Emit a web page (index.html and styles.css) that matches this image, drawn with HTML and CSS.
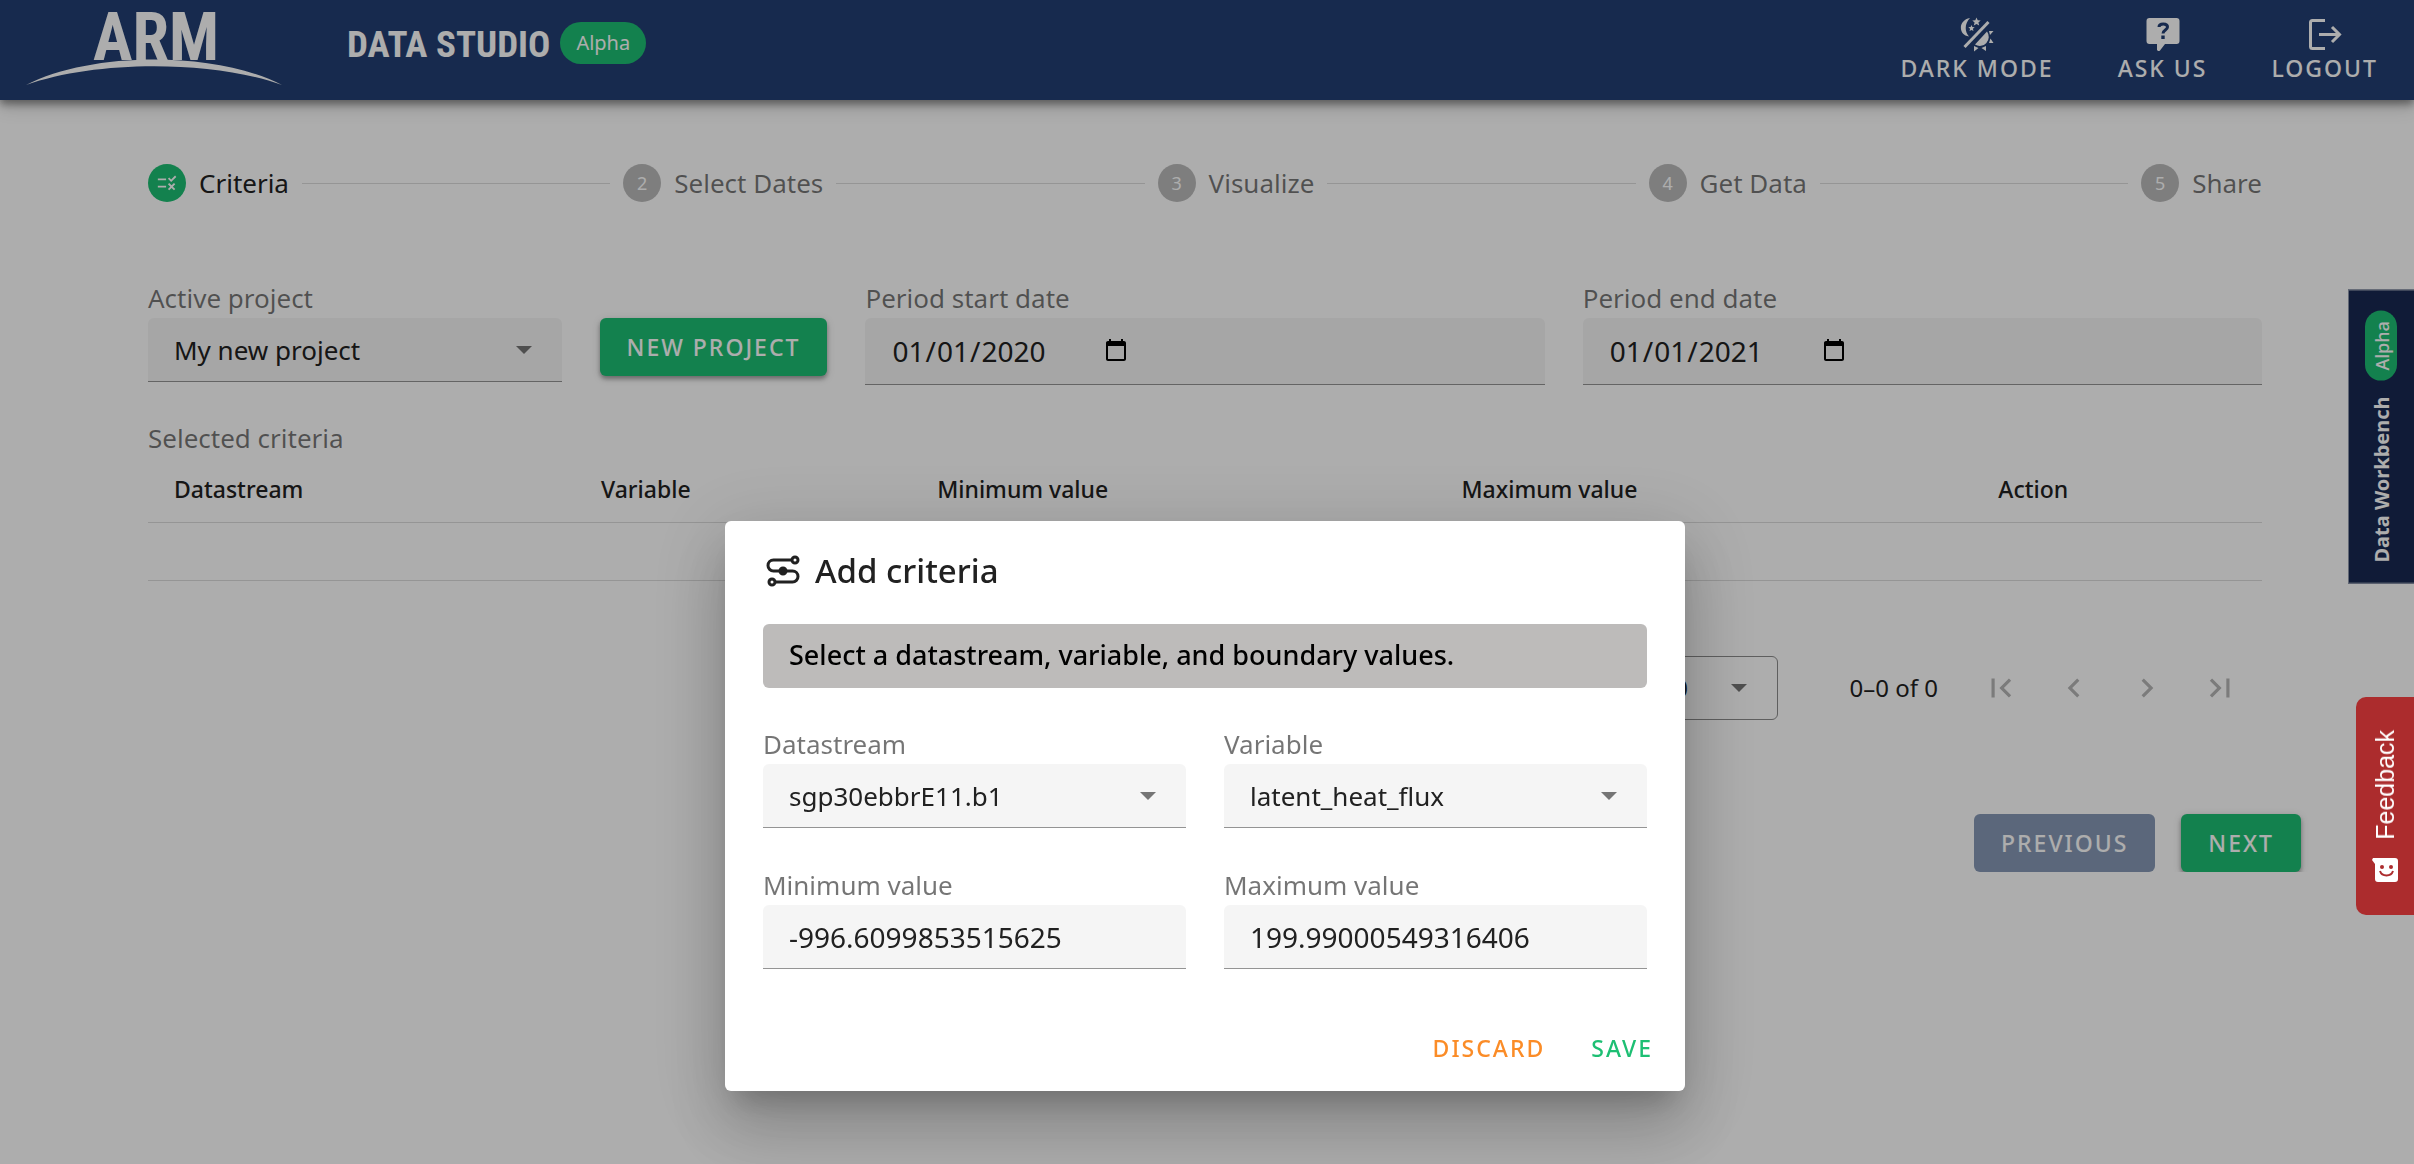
FILE: index.html
```
<!DOCTYPE html>
<html lang="en">
<head>
    <meta charset="UTF-8">
    <meta name="viewport" content="width=device-width, initial-scale=1.0">
    <title>Data Studio | ARM</title>
    <link rel="stylesheet" href="styles.css">
</head>
<body>
    <header class="header">
        <a href="#" class="logo" aria-label="ARM">
            <svg viewBox="0 0 260 100" width="260" height="100">
                <text x="67" y="60" class="logo-text">ARM</text>
                <path d="M0 85C66 51 190 51 256 85C186 60 70 60 0 85Z" fill="#fff"/>
            </svg>
        </a>
        <h1 class="title">DATA STUDIO</h1>
        <span class="badge">Alpha</span>
        <nav class="navbar">
            <button type="button" class="nav-btn">
                <svg viewBox="0 0 36 36" width="36" height="36" fill="#fff">
                    <path d="M11 2C-1 4-1 19 10 20.500C5 15 6 7 11 2Z"/>
                    <path d="M5.500 31L29.500 6" stroke="#fff" stroke-width="3"/>
                    <path d="M17.500 1.500l1.200 2.800 3 .2-2.300 2 .8 3-2.700-1.600-2.700 1.600.8-3-2.300-2 3-.2zM12.500 9l.9 2.100 2.300.2-1.800 1.500.6 2.300-2-1.200-2 1.200.6-2.300-1.800-1.500 2.300-.2z"/>
                    <path d="M28 15.500A9 9 0 0 1 16 28.500ZM30 15h4.500L31 19zM31.500 22.500l3 4.500H30zM15 30l4.500 2-4.500 3.500zM27 30v5l-4.500-3z"/>
                </svg>
                <span>DARK MODE</span>
            </button>
            <button type="button" class="nav-btn">
                <svg viewBox="0 0 36 36" width="36" height="36" fill="#fff">
                    <path d="M4.500 2h27a3 3 0 0 1 3 3v20a3 3 0 0 1-3 3H20l-5 6.500c-1 1-3 .5-3-1V28H4.500a3 3 0 0 1-3-3V5a3 3 0 0 1 3-3z"/>
                    <path d="M14 11c0-4 8.500-4 8.500 0 0 3-4.500 3-4.500 6.500" fill="none" stroke="#233f73" stroke-width="3"/>
                    <path d="M16.300 19.500h3.400v3.500h-3.400z" fill="#233f73"/>
                </svg>
                <span>ASK US</span>
            </button>
            <button type="button" class="nav-btn">
                <svg viewBox="0 0 36 36" width="36" height="36" fill="none" stroke="#fff" stroke-width="3">
                    <path d="M18 4.500H5.500a2 2 0 0 0-2 2v24a2 2 0 0 0 2 2H18M12 18.500h20M25 11l7.500 7.500L25 26"/>
                </svg>
                <span>LOGOUT</span>
            </button>
        </nav>
    </header>

    <main class="main">
        <ol class="stepper">
            <li class="step active">
                <span class="dot">
                    <svg viewBox="0 0 24 24" width="22" height="22" fill="#fff"><path d="M16.540 11L13 7.460l1.410-1.410 2.120 2.120 4.240-4.240 1.410 1.410L16.540 11zM11 7H2v2h9V7zm10 6.410L19.590 12 17 14.590 14.410 12 13 13.410 15.590 16 13 18.590 14.410 20 17 17.410 19.590 20 21 18.590 18.410 16 21 13.410zM11 15H2v2h9v-2z"/></svg>
                </span>
                Criteria
            </li>
            <li class="line"></li>
            <li class="step"><span class="dot">2</span>Select Dates</li>
            <li class="line"></li>
            <li class="step"><span class="dot">3</span>Visualize</li>
            <li class="line"></li>
            <li class="step"><span class="dot">4</span>Get Data</li>
            <li class="line"></li>
            <li class="step"><span class="dot">5</span>Share</li>
        </ol>

        <form class="filters">
            <div class="field">
                <label for="project">Active project</label>
                <select id="project" class="control select">
                    <option>My new project</option>
                </select>
            </div>
            <button type="button" class="btn">NEW PROJECT</button>
            <div class="field">
                <label for="start-date">Period start date</label>
                <input type="date" id="start-date" class="control date" value="2020-01-01">
            </div>
            <div class="field">
                <label for="end-date">Period end date</label>
                <input type="date" id="end-date" class="control date" value="2021-01-01">
            </div>
        </form>

        <h2 class="table-title">Selected criteria</h2>
        <table class="criteria">
            <thead>
                <tr>
                    <th class="col-stream">Datastream</th>
                    <th class="col-variable">Variable</th>
                    <th class="col-min">Minimum value</th>
                    <th class="col-max">Maximum value</th>
                    <th>Action</th>
                </tr>
            </thead>
            <tbody>
                <tr><td colspan="5"></td></tr>
            </tbody>
        </table>

        <div class="pagination">
            <select class="page-size" aria-label="Rows per page">
                <option>10</option>
            </select>
            <span class="range">0–0 of 0</span>
            <button type="button" class="page-btn" aria-label="First page" disabled>
                <svg viewBox="0 0 24 24" width="38" height="38"><path d="M18.410 16.590L13.820 12l4.590-4.590L17 6l-6 6 6 6zM6 6h2v12H6z"/></svg>
            </button>
            <button type="button" class="page-btn" aria-label="Previous page" disabled>
                <svg viewBox="0 0 24 24" width="38" height="38"><path d="M15.410 7.410L14 6l-6 6 6 6 1.410-1.410L10.830 12z"/></svg>
            </button>
            <button type="button" class="page-btn" aria-label="Next page" disabled>
                <svg viewBox="0 0 24 24" width="38" height="38"><path d="M10 6L8.590 7.410 13.170 12l-4.580 4.590L10 18l6-6z"/></svg>
            </button>
            <button type="button" class="page-btn" aria-label="Last page" disabled>
                <svg viewBox="0 0 24 24" width="38" height="38"><path d="M5.590 7.410L10.180 12l-4.590 4.590L7 18l6-6-6-6zM16 6h2v12h-2z"/></svg>
            </button>
        </div>
    </main>

    <div class="actions">
        <button type="button" class="btn" disabled>PREVIOUS</button>
        <button type="button" class="btn">NEXT</button>
    </div>

    <a href="#" class="workbench">Data Workbench <span class="workbench-badge">Alpha</span></a>

    <div class="overlay">
        <form class="dialog" role="dialog" aria-labelledby="dialog-title">
            <h2 class="dialog-title" id="dialog-title">
                <svg viewBox="0 0 36 36" width="36" height="36" fill="none" stroke="#212121" stroke-width="3">
                    <path d="M27 7H8.500a5.500 5.500 0 0 0 0 11h19a5.500 5.500 0 0 1 0 11H9"/>
                    <circle cx="30" cy="7" r="3"/>
                    <circle cx="7" cy="29" r="3"/>
                    <circle cx="18" cy="18" r="3" fill="#212121"/>
                </svg>
                Add criteria
            </h2>
            <p class="banner">Select a datastream, variable, and boundary values.</p>
            <div class="dialog-grid">
                <div class="field">
                    <label for="datastream">Datastream</label>
                    <select id="datastream" class="control select">
                        <option>sgp30ebbrE11.b1</option>
                    </select>
                </div>
                <div class="field">
                    <label for="variable">Variable</label>
                    <select id="variable" class="control select">
                        <option>latent_heat_flux</option>
                    </select>
                </div>
                <div class="field">
                    <label for="min-value">Minimum value</label>
                    <input type="text" id="min-value" class="control" value="-996.6099853515625">
                </div>
                <div class="field">
                    <label for="max-value">Maximum value</label>
                    <input type="text" id="max-value" class="control" value="199.99000549316406">
                </div>
            </div>
            <div class="dialog-actions">
                <button type="button" class="text-btn discard">DISCARD</button>
                <button type="submit" class="text-btn save">SAVE</button>
            </div>
        </form>
    </div>

    <button type="button" class="feedback">
        <svg viewBox="0 0 26 24" width="26" height="24">
            <path d="M1 0h22a3 3 0 0 1 3 3v18a3 3 0 0 1-3 3H6a3 3 0 0 1-3-3V6L0 2z" fill="#fff"/>
            <circle cx="10" cy="9" r="2" fill="#ac2c2d"/>
            <circle cx="19" cy="9" r="2" fill="#ac2c2d"/>
            <path d="M8 13c2 6 11 6 13 0" fill="none" stroke="#ac2c2d" stroke-width="2"/>
        </svg>
        <span>Feedback</span>
    </button>
</body>
</html>
```

FILE: styles.css
```
* {
    box-sizing: border-box;
}

body {
    font-family: "Noto Sans", "Open Sans", sans-serif;
    font-size: 26px;
    line-height: 36px;
    margin: 0;
    background-color: #fff;
    color: #212121;
}

button,
input,
select {
    font-family: inherit;
    font-size: inherit;
    color: inherit;
}

button {
    border: none;
    cursor: pointer;
}

/* Header */
.header {
    display: flex;
    align-items: center;
    height: 100px;
    padding: 0 18px 0 26px;
    background-color: #233f73;
    color: #fff;
    box-shadow: 0 4px 8px rgba(0, 0, 0, 0.4), 0 8px 16px rgba(0, 0, 0, 0.15);
}

.logo svg {
    display: block;
}

.logo-text {
    font-family: "Liberation Sans Narrow", "Roboto Condensed", Roboto, sans-serif;
    font-size: 66px;
    font-weight: bold;
    fill: #fff;
}

.title {
    margin: 0 10px 10px 61px;
    font-family: "Liberation Sans Narrow", "Roboto Condensed", Roboto, sans-serif;
    font-size: 37px;
    font-weight: bold;
    line-height: 48px;
}

.badge {
    margin-bottom: 14px;
    padding: 0 16px;
    border-radius: 21px;
    background-color: #1dbf73;
    font-size: 20px;
    line-height: 42px;
}

.navbar {
    display: flex;
    gap: 28px;
    margin-left: auto;
}

.nav-btn {
    display: flex;
    flex-direction: column;
    align-items: center;
    padding: 2px 18px;
    background: none;
    font-size: 23px;
    font-weight: 500;
    line-height: 32px;
    letter-spacing: 2px;
}

/* Stepper */
.main {
    padding: 64px 152px 0 148px;
}

.stepper {
    display: flex;
    align-items: center;
    gap: 13px;
    margin: 0;
    padding: 0;
    list-style: none;
}

.step {
    display: flex;
    align-items: center;
    gap: 13px;
    color: rgba(0, 0, 0, 0.54);
}

.step.active {
    color: #212121;
}

.dot {
    display: flex;
    align-items: center;
    justify-content: center;
    width: 38px;
    height: 38px;
    border-radius: 50%;
    background-color: #bababa;
    color: #fff;
    font-size: 18px;
}

.active .dot {
    background-color: #1dbf73;
}

.line {
    flex: 1;
    height: 1px;
    background-color: #dcdcdc;
}

/* Form fields */
.filters {
    display: grid;
    grid-template-columns: 414fr auto 680fr 680fr;
    gap: 38px;
    margin-top: 78px;
}

.filters .btn {
    margin-top: 38px;
}

.field {
    display: flex;
    flex-direction: column;
    gap: 2px;
}

.field label,
.table-title {
    color: rgba(0, 0, 0, 0.54);
}

.control {
    width: 100%;
    height: 64px;
    padding: 0 26px;
    border: none;
    border-bottom: 1px solid #949494;
    border-radius: 6px 6px 0 0;
    background-color: #f5f5f5;
}

input.control {
    font-size: 28px;
}

.date {
    display: flex;
    height: 67px;
}

.date::-webkit-datetime-edit {
    flex: none;
    width: 226px;
}

.date::-webkit-calendar-picker-indicator {
    width: 26px;
    height: 26px;
    margin: 0;
}

.select,
.page-size {
    appearance: none;
    background-image: url("data:image/svg+xml,%3Csvg xmlns='http://www.w3.org/2000/svg' width='16' height='8'%3E%3Cpath d='M0 0h16l-8 8z' fill='%23757575'/%3E%3C/svg%3E");
    background-repeat: no-repeat;
    background-position: right 30px center;
}

.btn {
    height: 58px;
    padding: 0 27px;
    border-radius: 6px;
    background-color: #1dbf73;
    color: #fff;
    font-size: 23px;
    font-weight: 500;
    letter-spacing: 2px;
    box-shadow: 0 3px 4px rgba(0, 0, 0, 0.3), 0 2px 8px rgba(0, 0, 0, 0.15);
}

.btn:disabled {
    background-color: #8799b6;
    box-shadow: none;
    cursor: default;
}

/* Criteria table */
.table-title {
    margin: 35px 0 0;
    font-size: 26px;
    font-weight: normal;
}

.criteria {
    width: 100%;
    border-collapse: collapse;
    table-layout: fixed;
    font-size: 23px;
}

.criteria th {
    height: 66px;
    padding: 0 26px;
    border-bottom: 1px solid #dcdcdc;
    font-weight: 500;
    text-align: left;
}

.criteria td {
    height: 58px;
    border-bottom: 1px solid #dcdcdc;
}

.col-stream {
    width: 20.2%;
}

.col-variable {
    width: 15.9%;
}

.col-min {
    width: 24.8%;
}

.col-max {
    width: 25.4%;
}

.pagination {
    display: flex;
    align-items: center;
    justify-content: flex-end;
    gap: 1px;
    margin-top: 71px;
    padding-right: 6px;
    font-size: 24px;
}

.page-size {
    width: 150px;
    height: 64px;
    padding: 0 32px;
    border: 1px solid #8c8c8c;
    border-radius: 6px;
    background-color: #fff;
}

.range {
    margin: 0 26px 0 71px;
}

.page-btn {
    display: flex;
    padding: 17px;
    background: none;
}

.page-btn svg {
    fill: #b5b5b5;
}

.actions {
    display: flex;
    justify-content: flex-end;
    gap: 26px;
    margin-top: 90px;
    padding-right: 113px;
}

/* Side tabs */
.workbench {
    position: fixed;
    top: 290px;
    right: 0;
    display: flex;
    align-items: center;
    gap: 16px;
    width: 66px;
    padding: 20px 0;
    border: 1px solid #8f98ab;
    border-left: none;
    background-color: #182952;
    color: #fff;
    font-size: 20px;
    font-weight: 700;
    text-decoration: none;
    writing-mode: vertical-rl;
    transform: rotate(180deg);
}

.workbench-badge {
    padding: 10px 0;
    border-radius: 16px;
    background-color: #1dbf73;
    font-size: 18px;
    font-weight: 500;
    line-height: 32px;
}

.feedback {
    position: fixed;
    top: 697px;
    right: 0;
    z-index: 3;
    display: flex;
    flex-direction: column-reverse;
    align-items: center;
    justify-content: center;
    gap: 18px;
    width: 58px;
    height: 218px;
    border-radius: 10px 0 0 10px;
    background-color: #ac2c2d;
    color: #fff;
    font-family: "Liberation Sans", Arial, sans-serif;
    font-size: 25px;
}

.feedback span {
    writing-mode: vertical-rl;
    transform: rotate(180deg);
}

/* Add criteria dialog */
.overlay {
    position: fixed;
    inset: 0;
    z-index: 2;
    display: flex;
    justify-content: center;
    align-items: flex-start;
    padding: 521px 4px 0 0;
    background-color: rgba(0, 0, 0, 0.32);
}

.dialog {
    width: 960px;
    padding: 32px 38px 13px;
    border-radius: 6px;
    background-color: #fff;
    box-shadow: 0 20px 26px -12px rgba(0, 0, 0, 0.2), 0 40px 64px 5px rgba(0, 0, 0, 0.14), 0 14px 76px 13px rgba(0, 0, 0, 0.12);
}

.dialog-title {
    display: flex;
    align-items: center;
    gap: 14px;
    margin: 0 0 35px;
    padding-left: 2px;
    font-size: 33px;
    font-weight: 500;
    line-height: 36px;
}

.banner {
    margin: 0 0 38px;
    padding: 13px 26px 15px;
    border-radius: 6px;
    background-color: #bdbbba;
    color: #000;
    font-size: 27px;
    font-weight: 500;
}

.dialog-grid {
    display: grid;
    grid-template-columns: 1fr 1fr;
    gap: 39px 38px;
}

.dialog-actions {
    display: flex;
    justify-content: flex-end;
    gap: 10px;
    margin-top: 49px;
}

.text-btn {
    height: 60px;
    padding: 0 18px;
    background: none;
    font-size: 23px;
    font-weight: 500;
    letter-spacing: 2px;
}

.dialog-actions .save {
    margin-right: -24px;
    color: #1dbf73;
}

.dialog-actions .discard {
    color: #fb8c27;
}
```
